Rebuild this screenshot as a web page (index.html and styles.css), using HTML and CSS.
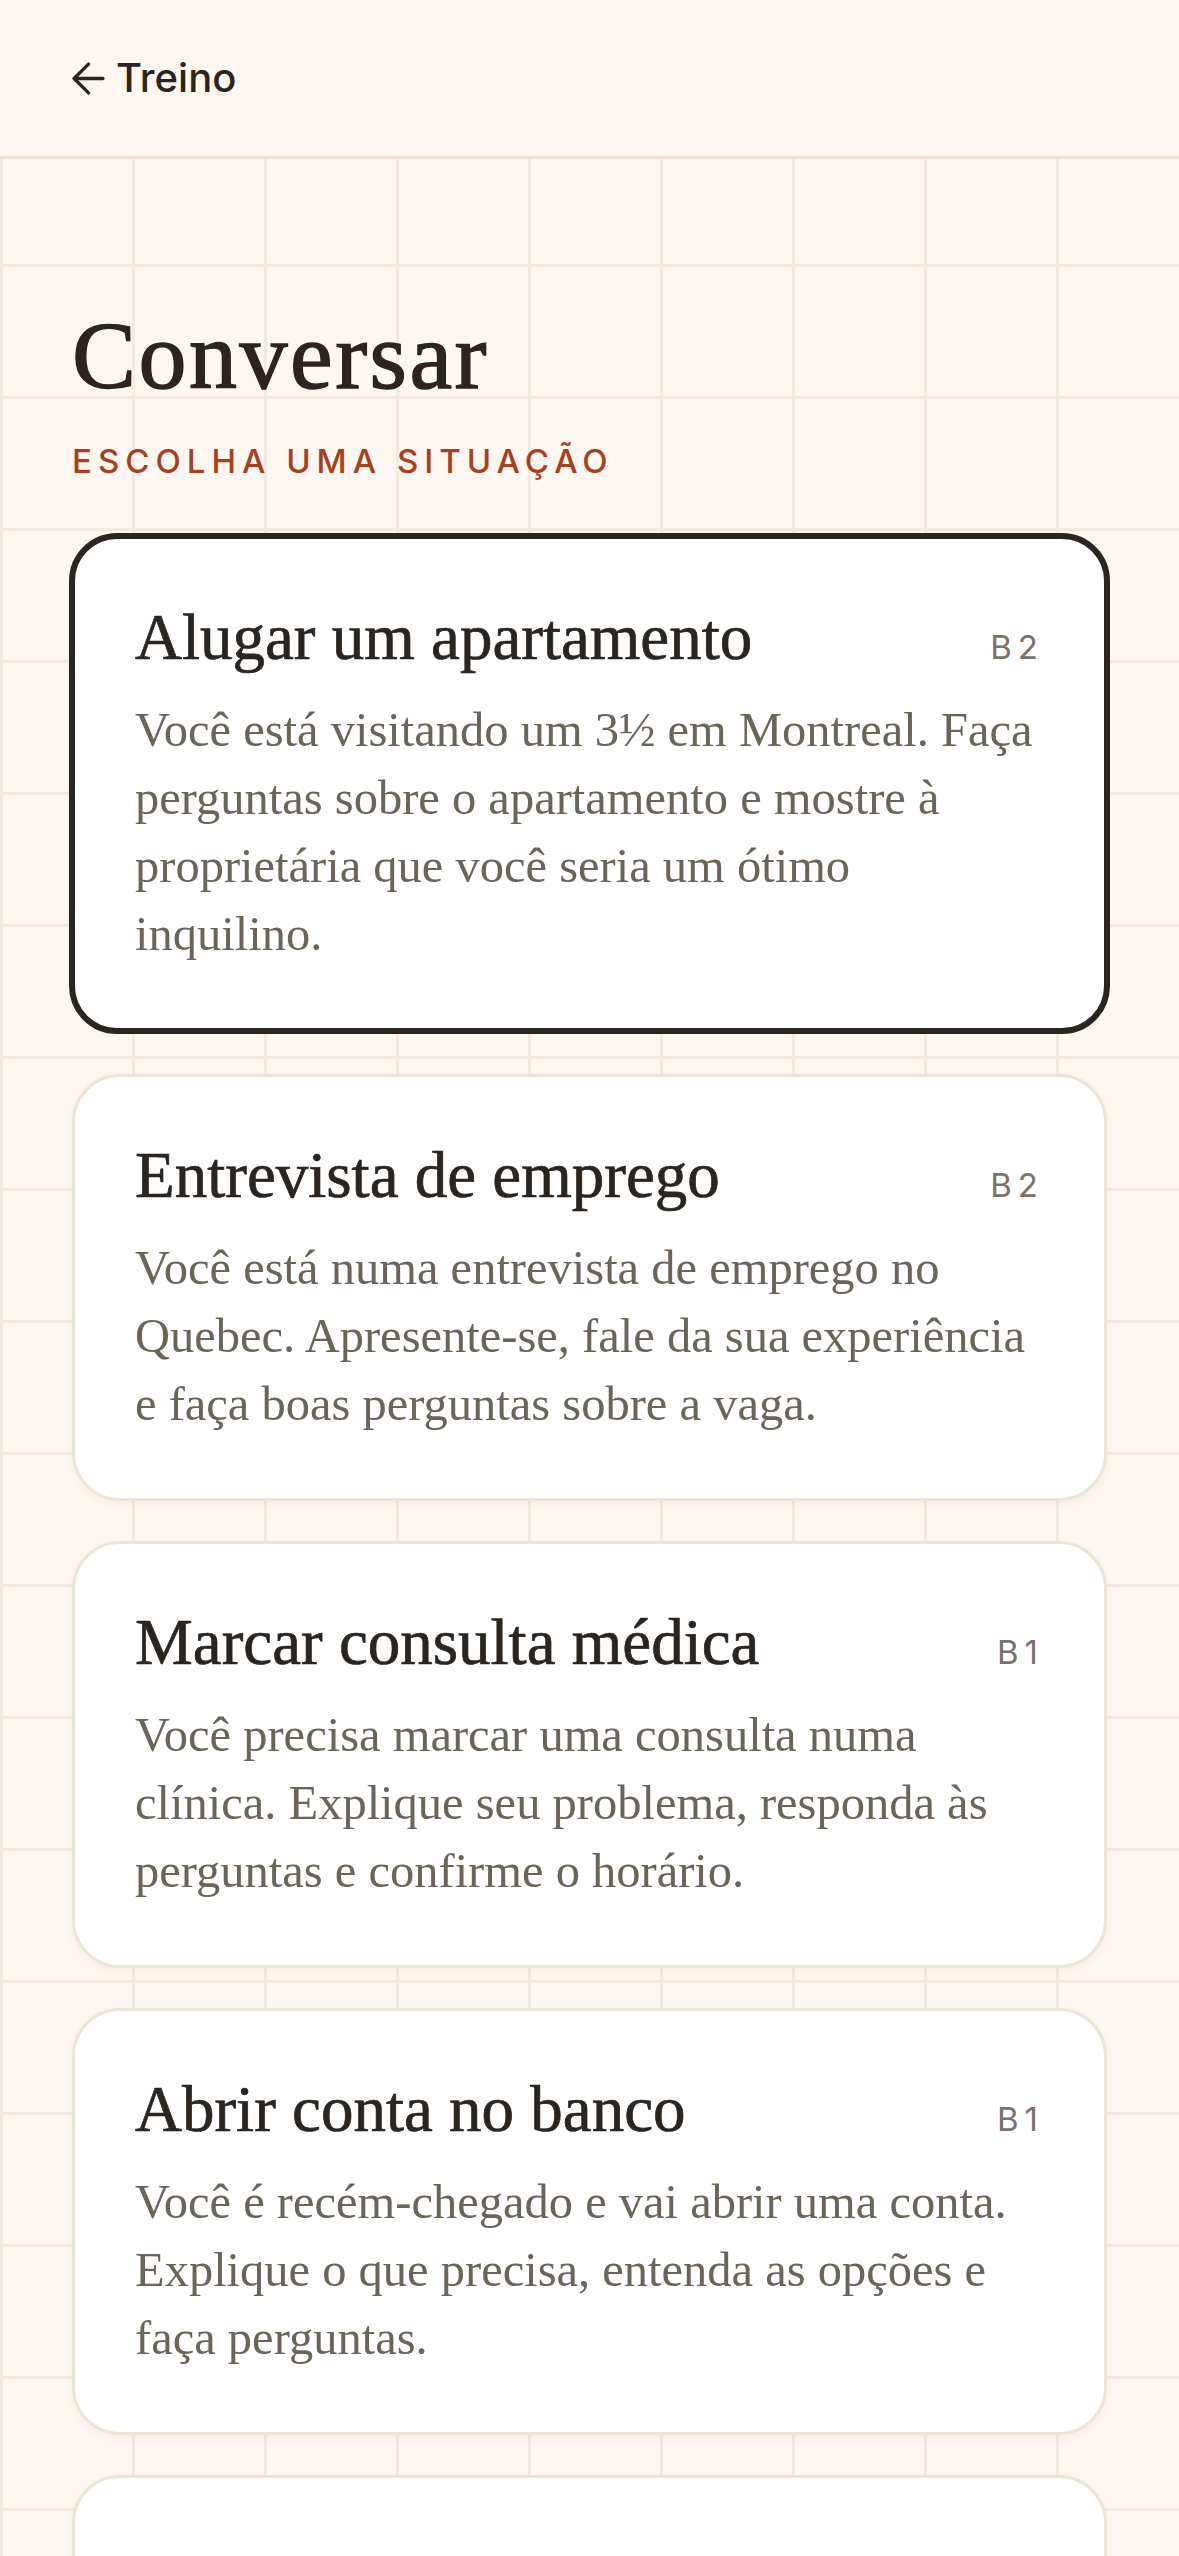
FILE: index.html
```html
<!DOCTYPE html>
<html lang="pt-BR">
<head>
<meta charset="utf-8">
<title>Conversar</title>
<link rel="stylesheet" href="styles.css">
</head>
<body>
<header class="topbar">
  <a class="back" href="#">
    <svg class="back-icon" viewBox="4 4 16 16" width="33" height="33" aria-hidden="true">
      <path d="M19 12H5M12 19l-7-7 7-7" fill="none" stroke="currentColor" stroke-width="1.6" stroke-linecap="round" stroke-linejoin="round"/>
    </svg>
    <span>Treino</span>
  </a>
</header>
<main class="page">
  <h1 class="title">Conversar</h1>
  <p class="eyebrow">Escolha uma situação</p>
  <div class="list">
    <div class="card selected">
      <div class="card-head">
        <h2 class="card-title">Alugar um apartamento</h2>
        <span class="level">B2</span>
      </div>
      <p class="card-desc">Você está visitando um 3½ em Montreal. Faça perguntas sobre o apartamento e mostre à proprietária que você seria um ótimo inquilino.</p>
    </div>
    <div class="card">
      <div class="card-head">
        <h2 class="card-title">Entrevista de emprego</h2>
        <span class="level">B2</span>
      </div>
      <p class="card-desc">Você está numa entrevista de emprego no Quebec. Apresente-se, fale da sua experiência e faça boas perguntas sobre a vaga.</p>
    </div>
    <div class="card">
      <div class="card-head">
        <h2 class="card-title">Marcar consulta médica</h2>
        <span class="level">B1</span>
      </div>
      <p class="card-desc">Você precisa marcar uma consulta numa clínica. Explique seu problema, responda às perguntas e confirme o horário.</p>
    </div>
    <div class="card">
      <div class="card-head">
        <h2 class="card-title">Abrir conta no banco</h2>
        <span class="level">B1</span>
      </div>
      <p class="card-desc">Você é recém-chegado e vai abrir uma conta. Explique o que precisa, entenda as opções e faça perguntas.</p>
    </div>
    <div class="card card-peek" aria-hidden="true"></div>
  </div>
</main>
</body>
</html>
```
FILE: styles.css
```css
* { box-sizing: border-box; }

html, body {
  margin: 0;
  padding: 0;
}

body {
  background-color: #fcf7f0;
  background-image:
    linear-gradient(to right, #f1ebe2 0, #f1ebe2 3px, transparent 3px),
    linear-gradient(to bottom, #f1ebe2 0, #f1ebe2 3px, transparent 3px);
  background-size: 132px 132px;
  background-position: 0 0;
  color: #2a2520;
  font-family: "Liberation Serif", "DejaVu Serif", serif;
}

.topbar {
  height: 159px;
  background: #fcf7f0;
  border-bottom: 3px solid #e8e2d3;
  display: flex;
  align-items: center;
  padding: 0 72px;
}

.back {
  display: flex;
  align-items: center;
  gap: 11px;
  color: #2a2520;
  text-decoration: none;
  font-family: Inter, "Liberation Sans", sans-serif;
  font-size: 40px;
  font-weight: 500;
  line-height: 1;
}

.back-icon {
  display: block;
  flex: none;
}

.page {
  padding: 144px 72px 80px;
}

.title {
  margin: 0;
  font-family: "Liberation Serif", "DejaVu Serif", serif;
  font-weight: 400;
  font-size: 96px;
  line-height: 106px;
  letter-spacing: 2.5px;
  color: #2a2520;
  -webkit-text-stroke: 1.4px #2a2520;
}

.eyebrow {
  margin: 32px 0 0;
  font-family: Inter, "Liberation Sans", sans-serif;
  font-size: 33px;
  line-height: 40px;
  font-weight: 500;
  letter-spacing: 6px;
  text-transform: uppercase;
  color: #a8401f;
}

.list {
  margin-top: 52px;
  display: flex;
  flex-direction: column;
  gap: 40px;
}

.card {
  background: #ffffff;
  border: 3px solid #ebe5d7;
  border-radius: 48px;
  padding: 60px;
  box-shadow: 0 3px 8px rgba(90, 70, 40, 0.05);
}

.card.selected {
  border: 6px solid #2a2520;
  margin: 0 -3px;
  box-shadow: none;
}

.card-peek {
  min-height: 300px;
}

.card-head {
  display: flex;
  justify-content: space-between;
  align-items: baseline;
  gap: 24px;
}

.card-title {
  margin: 0;
  font-family: "Liberation Serif", "DejaVu Serif", serif;
  font-weight: 400;
  font-size: 65px;
  line-height: 76px;
  color: #2a2520;
  -webkit-text-stroke: 0.7px #2a2520;
}

.level {
  font-family: Inter, "Liberation Sans", sans-serif;
  font-size: 33px;
  font-weight: 400;
  letter-spacing: 6px;
  color: #78726a;
}

.card-desc {
  margin: 21px 0 0;
  font-family: "Liberation Serif", "DejaVu Serif", serif;
  font-size: 48.5px;
  line-height: 68px;
  color: #6b6459;
}
```
